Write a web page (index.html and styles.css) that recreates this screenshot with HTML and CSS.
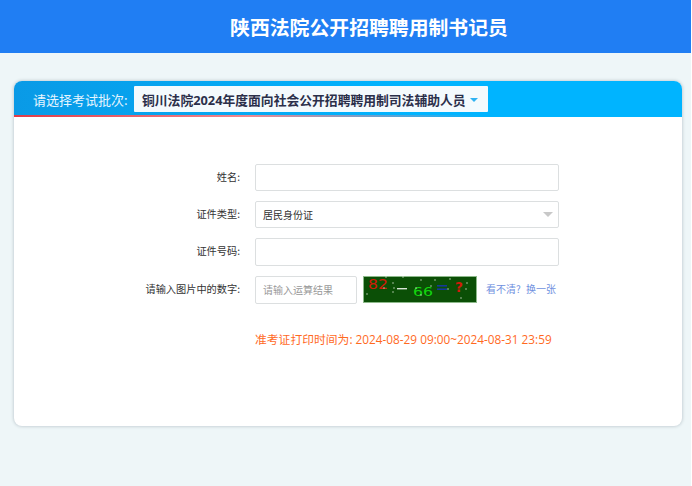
FILE: index.html
```html
<!DOCTYPE html>
<html lang="zh-CN">
<head>
<meta charset="utf-8">
<title>陕西法院公开招聘聘用制书记员</title>
<link rel="stylesheet" href="styles.css">
</head>
<body>
<div class="page">
  <header class="site-header"><h1 class="site-title">陕西法院公开招聘聘用制书记员</h1></header>
  <main class="panel">
    <div class="tabbar">
      <span class="batch-label">请选择考试批次:</span>
      <div class="batch-select">
        <span>铜川法院2024年度面向社会公开招聘聘用制司法辅助人员</span>
        <i class="batch-caret"></i>
      </div>
    </div>
    <form class="form">
      <div class="row">
        <label class="row-label">姓名:</label>
        <div class="field"></div>
      </div>
      <div class="row">
        <label class="row-label">证件类型:</label>
        <div class="field field-select"><span>居民身份证</span><i class="select-caret"></i></div>
      </div>
      <div class="row row-id">
        <label class="row-label">证件号码:</label>
        <div class="field field-tall"></div>
      </div>
      <div class="row row-captcha">
        <label class="row-label">请输入图片中的数字:</label>
        <div class="field field-code"><span>请输入运算结果</span></div>
        <svg class="captcha" width="114" height="27" viewBox="0 0 114 27">
          <rect x="0.5" y="0.5" width="113" height="26" fill="#0b4f06" stroke="#8db98a"/>
          <text x="5" y="13" class="cap-a" textLength="20" lengthAdjust="spacingAndGlyphs">82</text>
          <rect x="34" y="12" width="10" height="1.4" fill="#d8e6d6"/>
          <text x="50" y="20" class="cap-b" textLength="20" lengthAdjust="spacingAndGlyphs">66</text>
          <rect x="74" y="9" width="10" height="1.6" fill="#14389a"/>
          <rect x="74" y="12.4" width="10" height="1.6" fill="#14389a"/>
          <text x="92" y="16" class="cap-d" textLength="8" lengthAdjust="spacingAndGlyphs">?</text>
          <g fill="#d5e2d2">
            <circle cx="4" cy="18" r=".7"/><circle cx="23" cy="1" r=".7"/><circle cx="40" cy="1" r=".7"/>
            <circle cx="30" cy="7" r=".7"/><circle cx="31" cy="12" r=".7"/><circle cx="30" cy="16" r=".7"/>
            <circle cx="21" cy="12" r=".7"/><circle cx="58" cy="4" r=".7"/><circle cx="72" cy="4" r=".7"/>
            <circle cx="58" cy="19" r=".7"/><circle cx="68" cy="10" r=".7"/><circle cx="87" cy="3" r=".7"/>
            <circle cx="104" cy="7" r=".7"/><circle cx="103" cy="13" r=".7"/><circle cx="98" cy="22" r=".7"/>
            <circle cx="85" cy="13" r=".7"/><circle cx="53" cy="12" r=".7"/>
          </g>
        </svg>
        <div class="captcha-links"><a class="link">看不清?</a> <a class="link link-swap">换一张</a></div>
      </div>
      <p class="notice">准考证打印时间为: 2024-08-29 09:00~2024-08-31 23:59</p>
    </form>
  </main>
</div>
</body>
</html>
```

FILE: styles.css
```css
* { box-sizing: border-box; }
html, body { margin: 0; padding: 0; background: #fff; }
body { font-family: "Open Sans", "Noto Sans CJK SC", sans-serif; overflow: hidden; }
.page { width: 691px; height: 486px; background: #eef6f8; }
.site-header { height: 53px; background: #207ef3; padding-left: 47px; display: flex; align-items: center; justify-content: center; }
.site-title { margin: 0; color: #fff; font-size: 19.85px; font-weight: 700; line-height: 53px; font-family: "Noto Sans CJK SC", sans-serif; }
.panel { margin: 28px 9px 0 14px; height: 345px; background: #fff; border-radius: 8px; box-shadow: 0 0 3px 1px #c9d3d8; overflow: hidden; }
.tabbar { height: 36px; padding: 5px 0 0 19px; display: flex; align-items: flex-start; gap: 6px; background: linear-gradient(90deg, #0a9ae6 0%, #00b4ff 60%); position: relative; }
.tabbar::after { content: ""; position: absolute; left: 0; right: 0; bottom: 0; height: 2px; background: linear-gradient(90deg, #e03c48 0%, #ee8890 35%, #00b4ff 70%); }
.batch-label { width: 95px; color: #e6f5ff; font-size: 13px; line-height: 27px; font-family: "Noto Sans CJK SC", sans-serif; white-space: nowrap; }
.batch-select { width: 354px; height: 26px; background: #f4fafd; border-radius: 1px; padding-left: 8px; display: flex; align-items: center; gap: 4px; color: #2b2f4a; font-size: 12.8px; font-weight: 700; font-family: "Open Sans", "Noto Sans CJK SC", sans-serif; white-space: nowrap; }
.batch-caret { width: 0; height: 0; margin-top: 1px; border-left: 4px solid transparent; border-right: 4px solid transparent; border-top: 4px solid #2fb2f2; }
.form { padding-top: 47px; }
.row { display: flex; align-items: flex-start; height: 27px; margin-bottom: 10px; }
.row-id { height: 28px; }
.row-captcha { height: 27px; margin-bottom: 0; }
.row-label { width: 226px; flex: none; text-align: right; font-size: 10.2px; line-height: 26px; color: #333; font-family: "Noto Sans CJK SC", sans-serif; white-space: nowrap; }
.field { width: 304px; height: 27px; margin-left: 15px; background: #fff; border: 1px solid #dcdfe0; border-radius: 2px; font-size: 10px; line-height: 25px; color: #333; padding-left: 7px; font-family: "Noto Sans CJK SC", sans-serif; }
.field-tall { height: 28px; }
.field-select { display: flex; align-items: center; justify-content: space-between; padding-right: 5px; }
.select-caret { width: 0; height: 0; border-left: 5px solid transparent; border-right: 5px solid transparent; border-top: 5px solid #c8c8c8; }
.field-code { width: 102px; height: 28px; line-height: 26px; color: #999; font-size: 10px; }
.captcha { margin-left: 6px; flex: none; display: block; }
.cap-a, .cap-b, .cap-d { font-family: "DejaVu Sans", sans-serif; font-size: 14px; }
.cap-a { fill: #d01a0a; }
.cap-b { fill: #12d60e; font-size: 13px; }
.cap-d { fill: #d01a0a; font-weight: 700; }
.captcha-links { margin-left: 9px; font-size: 10px; line-height: 26px; white-space: nowrap; font-family: "Noto Sans CJK SC", sans-serif; }
.link { color: #6f8fe0; }
.link-swap { margin-left: 3px; }
.notice { margin: 27px 0 0 241px; color: #ff6a1f; font-size: 11.8px; line-height: 18px; white-space: nowrap; }
```
